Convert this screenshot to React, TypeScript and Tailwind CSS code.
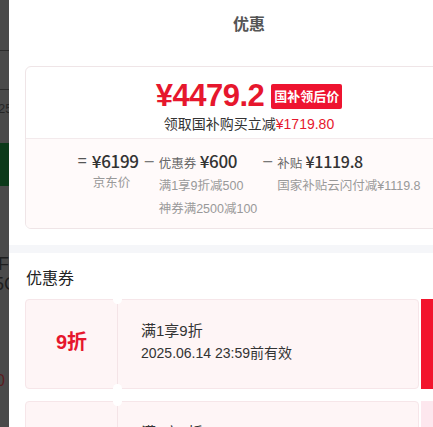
import React from 'react';

const FONT = { fontFamily: '"Liberation Sans", "Noto Sans CJK SC", sans-serif' };

function BackdropStrip() {
  // sliver of the page underneath the drawer, dimmed by the overlay
  return (
    <div className="w-[9px] shrink-0 h-full bg-[#4a4a4a] overflow-hidden flex flex-col">
      <div className="h-[50px] shrink-0" />
      <div className="h-px shrink-0 bg-[#2c2c2c]" />
      <div className="h-[38px] shrink-0" />
      <div className="h-px shrink-0 bg-[#2c2c2c]" />
      <div className="h-[12px] shrink-0" />
      <div className="text-[13px] leading-[14px] text-[#262626] -ml-[2px] whitespace-nowrap">25</div>
      <div className="h-[27px] shrink-0" />
      <div className="h-[43px] shrink-0 bg-[#0c3a1a]" />
      <div className="h-[68px] shrink-0" />
      <div className="text-[18px] leading-[20px] text-[#1e1e1e] -ml-[2px]">F</div>
      <div className="text-[18px] leading-[20px] text-[#1e1e1e] -ml-[6px] whitespace-nowrap">5C</div>
      <div className="h-[78px] shrink-0" />
      <div className="text-[16px] leading-[18px] text-[#5a1c1f] -ml-[4px]">0</div>
    </div>
  );
}

const NUM = "font-['Noto_Sans_CJK_SC'] font-medium tracking-[-0.3px]";

function PriceCard() {
  return (
    <div className="shrink-0 mx-4 mt-4 rounded-[6px] border border-[#efe5e7] overflow-hidden">
      <div className="h-[71px] flex flex-col items-center pt-[13px]">
        <div className="flex items-center gap-[7px]">
          <span className="text-[31px] leading-[32px] font-bold text-[#e6172d] tracking-[-0.5px]">¥4479.2</span>
          <span className="bg-[#ee1430] text-white text-[13px] leading-[25px] font-bold px-[3px] rounded-[2px]">国补领后价</span>
        </div>
        <div className="mt-[3px] text-[14px] leading-[18px] text-[#333]">
          领取国补购买立减<span className="text-[#e6172d]">¥1719.80</span>
        </div>
      </div>
      <div className="border-t border-[#f3eaec] bg-[#fffafa] h-[90px] pt-[11px] flex justify-center gap-[6px]">
        <div className="flex gap-[5px]">
          <span className="text-[16px] leading-[22px] text-[#555]">=</span>
          <div className="flex flex-col">
            <span className={`text-[17px] leading-[22px] text-[#333] ${NUM}`}>¥6199</span>
            <span className="text-[12.5px] leading-[23px] text-[#999] pl-[1px]">京东价</span>
          </div>
        </div>
        <div className="flex gap-[5px]">
          <span className="text-[16px] leading-[22px] text-[#777]">–</span>
          <div className="flex flex-col">
            <span className="leading-[22px] text-[#333]">
              <span className="text-[12.5px] text-[#666]">优惠券</span>
              <span className={`text-[17px] ${NUM}`}> ¥600</span>
            </span>
            <span className="text-[12.5px] leading-[23px] text-[#999]">满1享9折减500</span>
            <span className="text-[12.5px] leading-[23px] text-[#999]">神券满2500减100</span>
          </div>
        </div>
        <div className="flex gap-[5px]">
          <span className="text-[16px] leading-[22px] text-[#777]">–</span>
          <div className="flex flex-col">
            <span className="leading-[22px] text-[#333]">
              <span className="text-[12.5px] text-[#666]">补贴</span>
              <span className={`text-[16px] ${NUM} font-bold`}> ¥1119.8</span>
            </span>
            <span className="text-[12.5px] leading-[23px] text-[#999]">国家补贴云闪付减¥1119.8</span>
          </div>
        </div>
      </div>
    </div>
  );
}

type Coupon = { tag: string; title: string; expire: string; active: boolean };

function CouponRow({ c }: { c: Coupon }) {
  return (
    <div className="flex h-[90px] shrink-0 gap-[2px]">
      <div className="w-[394px] shrink-0 flex bg-[#fef5f6] border border-[#f6e6e9] rounded-[4px]">
        <div className="relative w-[92px] shrink-0 flex items-center justify-center border-r border-[#f4e4e7]">
          <span className="text-[20px] font-bold text-[#e6172d] -mt-[4px]">{c.tag}</span>
          <span className="absolute -right-[5px] -top-[5px] w-[9px] h-[9px] rounded-full bg-white" />
          <span className="absolute -right-[5px] -bottom-[5px] w-[9px] h-[9px] rounded-full bg-white" />
        </div>
        <div className="flex flex-col justify-center pl-[23px] pb-[4px]">
          <span className="text-[15px] leading-[23px] text-[#333]">{c.title}</span>
          <span className="text-[14px] leading-[23px] text-[#333]">{c.expire}</span>
        </div>
      </div>
      <div className={`flex-1 ${c.active ? 'bg-[#f2142c]' : 'bg-[#fde7ee]'}`} />
    </div>
  );
}

const coupons: Coupon[] = [
  { tag: '9折', title: '满1享9折', expire: '2025.06.14 23:59前有效', active: true },
  { tag: '9折', title: '满1享9折', expire: '2025.06.14 23:59前有效', active: false },
];

export default function App() {
  return (
    <div className="w-[433px] h-[427px] flex overflow-hidden bg-white" style={FONT}>
      <BackdropStrip />
      <div className="w-[480px] shrink-0 h-full bg-white flex flex-col overflow-hidden">
        <div className="h-[50px] shrink-0 flex items-center justify-center text-[16px] font-bold text-[#555]">优惠</div>
        <PriceCard />
        <div className="h-[8px] mt-4 bg-[#f5f6f9] shrink-0" />
        <div className="shrink-0 pl-[17px] pt-[16px] h-[36px] text-[16px] leading-[20px] text-[#222]">优惠券</div>
        <div className="shrink-0 mx-4 mt-[10px] flex flex-col gap-[12px]">
          {coupons.map((c, i) => <CouponRow key={i} c={c} />)}
        </div>
      </div>
    </div>
  );
}
